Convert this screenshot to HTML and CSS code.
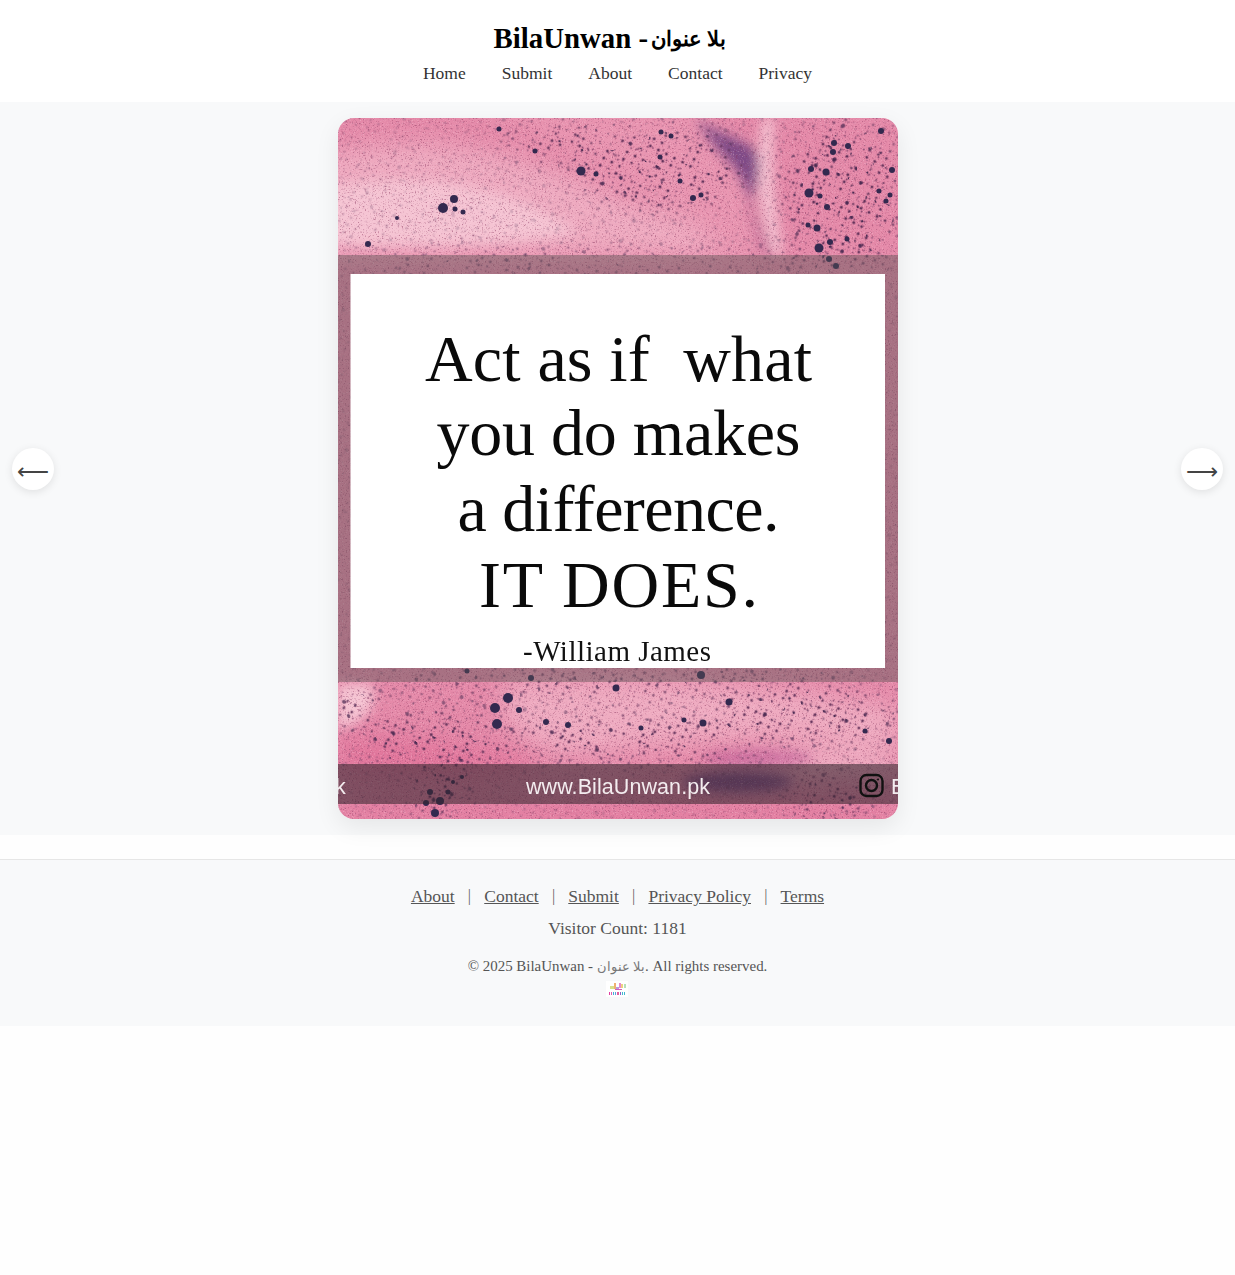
FILE: index.html
```html
<!DOCTYPE html>
<html lang="en">
<head>
<meta charset="utf-8">
<title>BilaUnwan - بلا عنوان</title>
<link rel="stylesheet" href="styles.css">
</head>
<body>
<header class="site-header">
  <h1 class="site-title">BilaUnwan - <span class="ar">بلا عنوان</span></h1>
  <nav class="site-nav">
    <a href="#">Home</a>
    <a href="#">Submit</a>
    <a href="#">About</a>
    <a href="#">Contact</a>
    <a href="#">Privacy</a>
  </nav>
</header>

<main class="viewer">
  <button class="arrow arrow-left" type="button">⟵</button>
  <figure class="poster">
    <svg class="poster-art" viewBox="0 0 560 701" width="560" height="701" xmlns="http://www.w3.org/2000/svg">
      <defs>
        <filter id="blur12" x="-30%" y="-30%" width="160%" height="160%"><feGaussianBlur stdDeviation="12"/></filter>
        <filter id="blur6" x="-30%" y="-30%" width="160%" height="160%"><feGaussianBlur stdDeviation="6"/></filter>
        <filter id="grain" x="0" y="0" width="100%" height="100%" color-interpolation-filters="sRGB">
          <feTurbulence type="fractalNoise" baseFrequency="0.7" numOctaves="2" seed="4"/>
          <feColorMatrix type="matrix" values="0 0 0 0 0.55  0 0 0 0 0.22  0 0 0 0 0.38  3 3 0 0 -3.3"/>
        </filter>
        <filter id="paleGrain" x="0" y="0" width="100%" height="100%" color-interpolation-filters="sRGB">
          <feTurbulence type="fractalNoise" baseFrequency="0.9" numOctaves="1" seed="11"/>
          <feColorMatrix type="matrix" values="0 0 0 0 1  0 0 0 0 0.85  0 0 0 0 0.9  0 3 3 0 -3.2"/>
        </filter>
        <filter id="patchA" x="0" y="0" width="100%" height="100%" color-interpolation-filters="sRGB">
          <feTurbulence type="fractalNoise" baseFrequency="0.06" numOctaves="2" seed="3"/>
          <feColorMatrix type="matrix" values="0 0 0 0 1  0 0 0 0 1  0 0 0 0 1  14 0 0 0 -6.6"/>
        </filter>
        <filter id="patchB" x="0" y="0" width="100%" height="100%" color-interpolation-filters="sRGB">
          <feTurbulence type="fractalNoise" baseFrequency="0.11" numOctaves="2" seed="15"/>
          <feColorMatrix type="matrix" values="0 0 0 0 1  0 0 0 0 1  0 0 0 0 1  16 0 0 0 -8.4"/>
        </filter>
        <pattern id="dotsFine" width="5.3" height="4.7" patternUnits="userSpaceOnUse" patternTransform="rotate(12)">
          <circle cx="1.5" cy="1.5" r="0.95" class="dot-fine"/>
        </pattern>
        <pattern id="dotsMid" width="9" height="8" patternUnits="userSpaceOnUse" patternTransform="rotate(27)">
          <circle cx="3" cy="3" r="1.5" class="dot-mid"/>
        </pattern>
        <pattern id="dotsBig" width="19" height="15" patternUnits="userSpaceOnUse" patternTransform="rotate(-17)">
          <circle cx="6" cy="5" r="1.9" class="dot-big"/>
          <circle cx="15" cy="12" r="1.3" class="dot-big"/>
        </pattern>
        <mask id="maskA" maskUnits="userSpaceOnUse" x="0" y="0" width="560" height="701">
          <rect width="560" height="701" filter="url(#patchA)"/>
        </mask>
        <mask id="maskB" maskUnits="userSpaceOnUse" x="0" y="0" width="560" height="701">
          <rect width="560" height="701" filter="url(#patchB)"/>
        </mask>
        <mask id="dotMask" maskUnits="userSpaceOnUse" x="0" y="0" width="560" height="701">
          <rect width="560" height="701" fill="#333"/>
          <g filter="url(#blur12)" fill="#fff">
            <ellipse cx="505" cy="75" rx="60" ry="75"/>
            <ellipse cx="320" cy="50" rx="85" ry="42"/>
            <ellipse cx="230" cy="25" rx="70" ry="18"/>
            <ellipse cx="100" cy="620" rx="80" ry="28"/>
            <ellipse cx="290" cy="622" rx="140" ry="22"/>
            <ellipse cx="470" cy="600" rx="95" ry="24"/>
            <ellipse cx="100" cy="672" rx="30" ry="30"/>
            <ellipse cx="15" cy="590" rx="30" ry="16"/>
            <ellipse cx="490" cy="680" rx="45" ry="22"/>
            <ellipse cx="280" cy="565" rx="250" ry="12"/>
            <ellipse cx="280" cy="145" rx="280" ry="8"/>
          </g>
        </mask>
      </defs>

      <rect class="art-base" width="560" height="701"/>
      <g filter="url(#blur12)">
        <path class="art-light" d="M-20 40C70 10 180 30 270 75C340 105 410 110 425 137H-20Z"/>
        <path class="art-mid" d="M130 -10C210 20 300 60 390 135L440 135C420 70 390 20 360 -10Z"/>
        <path class="art-light" d="M170 565C300 555 450 570 560 590V630C430 610 380 625 230 635C180 630 150 590 170 565Z"/>
        <path class="art-sat" d="M0 620C60 610 130 630 210 640C180 670 60 670 0 660Z"/>
        <path class="art-light" d="M380 650C460 625 520 620 560 640V660H380Z"/>
        <path class="art-sat" d="M0 686H560V701H0Z"/>
      </g>
      <g filter="url(#blur6)">
        <path class="art-pale" d="M-10 70C80 50 180 70 240 115C200 125 80 130 -10 125Z"/>
        <path class="art-pale" d="M0 566H32C45 585 25 605 0 612Z"/>
        <path class="art-pale" d="M425 0C415 60 425 100 436 137L445 137C438 100 432 50 436 0Z"/>
        <path class="art-streak" d="M358 0C375 15 395 17 415 30C425 40 420 58 414 85C410 75 404 55 390 42C378 30 368 18 358 0Z"/>
        <path class="art-streak-soft" d="M410 70C416 90 425 115 435 137L425 137C418 115 410 95 410 70Z"/>
        <ellipse class="art-streak-mag" cx="420" cy="640" rx="55" ry="9"/>
        <ellipse class="art-streak" cx="400" cy="664" rx="55" ry="10"/>
      </g>

      <rect width="560" height="701" filter="url(#grain)" class="art-grain"/>
      <rect width="560" height="701" filter="url(#paleGrain)" class="art-pale-grain"/>
      <g mask="url(#dotMask)">
        <g mask="url(#maskB)"><rect width="560" height="701" fill="url(#dotsFine)"/></g>
        <g mask="url(#maskA)"><rect width="560" height="701" fill="url(#dotsMid)"/></g>
        <g mask="url(#maskB)"><rect width="560" height="701" fill="url(#dotsBig)"/></g>
      </g>

      <g class="bubbles">
        <circle cx="243" cy="53" r="4.5"/><circle cx="105" cy="90" r="5"/><circle cx="116" cy="81" r="4"/>
        <circle cx="117" cy="91" r="2.5"/><circle cx="125" cy="94" r="2.5"/><circle cx="59" cy="100" r="2"/>
        <circle cx="30" cy="126" r="3"/><circle cx="161" cy="11" r="2.5"/><circle cx="543" cy="13" r="3"/>
        <circle cx="496" cy="25" r="3"/><circle cx="510" cy="28" r="3"/><circle cx="495" cy="34" r="3"/>
        <circle cx="488" cy="54" r="3.5"/><circle cx="473" cy="51" r="3"/><circle cx="471" cy="75" r="4.5"/>
        <circle cx="482" cy="78" r="2.5"/><circle cx="489" cy="89" r="3"/><circle cx="479" cy="110" r="3.5"/>
        <circle cx="470" cy="107" r="2.5"/><circle cx="481" cy="130" r="4.5"/><circle cx="492" cy="124" r="3"/>
        <circle cx="509" cy="121" r="2.5"/><circle cx="554" cy="52" r="3"/><circle cx="548" cy="83" r="2.5"/>
        <circle cx="552" cy="77" r="2.5"/><circle cx="541" cy="73" r="2.5"/><circle cx="491" cy="141" r="3"/>
        <circle cx="498" cy="148" r="3"/><circle cx="355" cy="80" r="3"/><circle cx="363" cy="77" r="2.5"/>
        <circle cx="342" cy="63" r="2.5"/><circle cx="258" cy="56" r="2.5"/><circle cx="197" cy="33" r="2.5"/>
        <circle cx="323" cy="14" r="2.5"/><circle cx="333" cy="18" r="2.5"/><circle cx="322" cy="39" r="2.5"/>
        <circle cx="170" cy="580" r="5"/><circle cx="157" cy="590" r="5"/><circle cx="181" cy="592" r="3"/>
        <circle cx="159" cy="606" r="5"/><circle cx="208" cy="604" r="3"/><circle cx="230" cy="607" r="3"/>
        <circle cx="278" cy="570" r="3.5"/><circle cx="391" cy="584" r="3.5"/><circle cx="365" cy="605" r="3.5"/>
        <circle cx="346" cy="602" r="2.5"/><circle cx="303" cy="610" r="2.5"/><circle cx="551" cy="623" r="3"/>
        <circle cx="527" cy="613" r="2.5"/><circle cx="363" cy="557" r="4"/><circle cx="193" cy="560" r="3"/>
        <circle cx="129" cy="553" r="2.5"/><circle cx="92" cy="674" r="3"/><circle cx="102" cy="683" r="4"/>
        <circle cx="88" cy="685" r="3"/><circle cx="97" cy="695" r="4"/><circle cx="110" cy="674" r="2.5"/>
        <circle cx="115" cy="664" r="2"/><circle cx="124" cy="659" r="2"/>
      </g>

      <rect class="band" y="137" width="560" height="427"/>
      <rect class="band-low" y="646" width="560" height="40"/>
      <rect class="panel" x="12.5" y="156" width="534.5" height="394"/>

      <text class="quote" x="280.5" y="263" text-anchor="middle" textLength="387">Act as if  what</text>
      <text class="quote" x="280.5" y="337" text-anchor="middle" textLength="364">you do makes</text>
      <text class="quote" x="280.5" y="413" text-anchor="middle" textLength="322">a difference.</text>
      <text class="quote" x="280.5" y="489" text-anchor="middle" textLength="279">IT DOES.</text>
      <text class="quote-by" x="279" y="543" text-anchor="middle" textLength="188">-William James</text>
      <text class="url" x="280" y="676" text-anchor="middle" textLength="184">www.BilaUnwan.pk</text>
      <text class="url" x="-3" y="676">k</text>
      <text class="url" x="553" y="676">B</text>
      <g class="insta">
        <rect x="522.5" y="657" width="22" height="21" rx="6"/>
        <circle cx="533.5" cy="667.5" r="5.5"/>
        <circle class="insta-dot" cx="540" cy="661.5" r="1"/>
      </g>
    </svg>
  </figure>
  <button class="arrow arrow-right" type="button">⟶</button>
</main>

<footer class="site-footer">
  <div class="footer-links">
    <a href="#">About</a><span class="sep">|</span>
    <a href="#">Contact</a><span class="sep">|</span>
    <a href="#">Submit</a><span class="sep">|</span>
    <a href="#">Privacy Policy</a><span class="sep">|</span>
    <a href="#">Terms</a>
  </div>
  <p class="visitors">Visitor Count: 1181</p>
  <p class="copyright">© 2025 BilaUnwan - <span class="ar">بلا عنوان</span>. All rights reserved.</p>
  <svg class="footer-logo" viewBox="0 0 22 16" width="22" height="16" xmlns="http://www.w3.org/2000/svg" role="img" aria-label="BilaUnwan logo">
    <rect width="22" height="16" fill="#fff"/>
    <rect x="4" y="5" width="4" height="3" fill="#d7e08a"/>
    <rect x="8" y="2" width="2" height="6" fill="#f0b070"/>
    <rect x="10" y="6" width="3" height="2" fill="#b89ae0"/>
    <rect x="13" y="2" width="2" height="5" fill="#e88ad0"/>
    <rect x="15" y="3" width="2" height="4" fill="#eed080"/>
    <rect x="18" y="3" width="2" height="4" fill="#b8e0b8"/>
    <rect x="9" y="8" width="7" height="1" fill="#d060b8"/>
    <rect x="3" y="11" width="1" height="3" fill="#e040a0"/>
    <rect x="5" y="11" width="1" height="3" fill="#e060b0"/>
    <rect x="7" y="11" width="1" height="3" fill="#40b0d8"/>
    <rect x="9" y="11" width="1" height="3" fill="#60a0e0"/>
    <rect x="11" y="11" width="2" height="3" fill="#e060a0"/>
    <rect x="14" y="11" width="1" height="3" fill="#9060c0"/>
    <rect x="16" y="11" width="1" height="3" fill="#40b8d0"/>
    <rect x="18" y="11" width="1" height="3" fill="#40b8d0"/>
  </svg>
</footer>
</body>
</html>
```

FILE: styles.css
```css
* { box-sizing: border-box; }
html, body { margin: 0; padding: 0; }
body {
  background: #fefefe;
  color: #333;
  font-family: "Liberation Serif", "Noto Sans", serif;
}
a { color: inherit; }

.site-header {
  background: #fff;
  height: 102px;
  padding-top: 21px;
  text-align: center;
}
.site-title {
  margin: 0;
  height: 34px;
  padding-right: 15px;
  color: #000;
  font-size: 28.8px;
  line-height: 34px;
  font-weight: 700;
}
.site-title .ar {
  font-size: 21px;
  line-height: 0;
  position: relative;
  top: -2px;
  margin-left: -4px;
}
.site-nav {
  display: flex;
  justify-content: center;
  gap: 36px;
  margin-top: 8px;
  font-size: 17.5px;
  line-height: 20px;
}
.site-nav a { text-decoration: none; color: #333; }

.viewer {
  position: relative;
  display: flex;
  justify-content: center;
  padding: 16px;
  background: #f8f9fa;
}
.poster {
  margin: 0;
  width: 560px;
  height: 701px;
  border-radius: 16px;
  overflow: hidden;
  box-shadow: 0 8px 24px rgba(0, 0, 0, 0.08);
}
.poster-art { display: block; }

.art-base { fill: #e58aa9; }
.art-light { fill: #efacc1; }
.art-mid { fill: #e995b1; }
.art-sat { fill: #e2779c; }
.art-pale { fill: #f5c4d3; }
.art-streak { fill: #7d4a86; }
.art-streak-soft { fill: #b0608f; opacity: 0.7; }
.art-streak-mag { fill: #b8508f; opacity: 0.55; }
.art-grain { opacity: 0.5; }
.art-pale-grain { opacity: 0.3; }
.dot-fine { fill: #8a4a72; }
.dot-mid { fill: #64345c; }
.dot-big { fill: #4a2a52; }
.bubbles circle { fill: #33294f; }
.band { fill: rgba(88, 80, 82, 0.43); }
.band-low { fill: rgba(55, 40, 48, 0.58); }
.panel { fill: #fff; }
.quote {
  font-family: "Liberation Serif", serif;
  font-size: 66px;
  fill: #0a0a0a;
  white-space: pre;
}
.quote-by {
  font-family: "Liberation Serif", serif;
  font-size: 29px;
  fill: #111;
}
.url {
  font-family: "Liberation Sans", sans-serif;
  font-size: 21.5px;
  fill: #f3ecef;
}
.insta rect, .insta circle {
  fill: none;
  stroke: #111;
  stroke-width: 2.4;
}
.insta .insta-dot { fill: #111; stroke: none; }

.arrow {
  position: absolute;
  top: 346px;
  width: 42px;
  height: 42px;
  padding: 0;
  border: 0;
  border-radius: 50%;
  background: #fff;
  color: #444;
  font-family: "DejaVu Sans", sans-serif;
  font-size: 22.4px;
  line-height: 46px;
  text-align: center;
  box-shadow: 0 2px 8px rgba(0, 0, 0, 0.1);
}
.arrow-left { left: 12px; }
.arrow-right { right: 12px; }

.site-footer {
  margin-top: 24px;
  height: 167px;
  padding-top: 26px;
  border-top: 1px solid #e6e6e6;
  background: #f8f9fa;
  color: #555;
  text-align: center;
}
.footer-links {
  display: flex;
  justify-content: center;
  gap: 13.2px;
  font-size: 17.5px;
  line-height: 20px;
}
.footer-links a { color: #555; }
.sep { color: #666; font-size: 16px; }
.visitors {
  margin: 12px 0 0;
  font-size: 17.5px;
  line-height: 20px;
}
.copyright {
  margin: 19px 0 0;
  font-size: 14.95px;
  line-height: 18px;
}
.copyright .ar { font-size: 12.6px; color: #777; line-height: 0; }
.footer-logo { display: block; margin: 6px auto 0; position: relative; left: -1px; }
```
